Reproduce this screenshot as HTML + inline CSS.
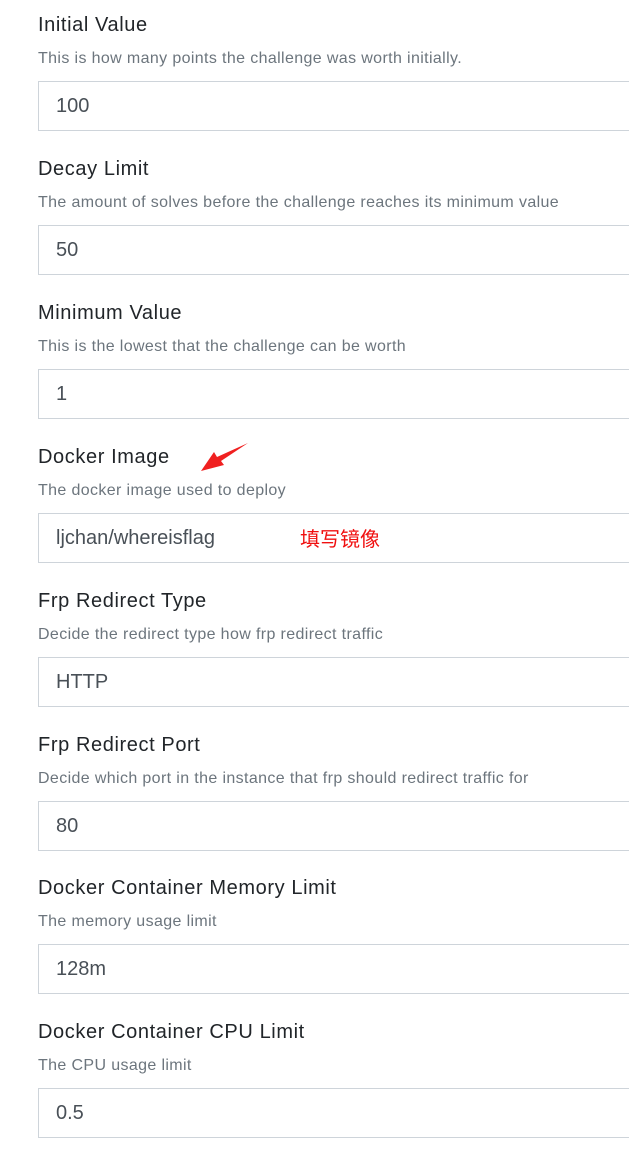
<!DOCTYPE html>
<html><head><meta charset="utf-8"><style>
body{margin:0;background:#fff;width:629px;height:1164px;overflow:hidden;position:relative;font-family:"Liberation Sans",sans-serif}
.g{position:absolute;left:38px;width:620px}
.l{position:absolute;top:1px;font-size:20px;color:#212529;line-height:24px;white-space:nowrap;letter-spacing:0.6px}
.d{position:absolute;top:37px;font-size:16px;color:#6c757d;line-height:20px;white-space:nowrap;letter-spacing:0.37px}
.i{position:absolute;top:69px;left:0;width:620px;height:48px;border:1px solid #ced4da;box-sizing:content-box;font-size:20px;color:#495057;line-height:48px;padding-left:17px}
</style></head><body>
<div class="g" style="top:12px"><div class="l">Initial Value</div><div class="d">This is how many points the challenge was worth initially.</div><div class="i">100</div></div>
<div class="g" style="top:156px"><div class="l">Decay Limit</div><div class="d">The amount of solves before the challenge reaches its minimum value</div><div class="i">50</div></div>
<div class="g" style="top:300px"><div class="l">Minimum Value</div><div class="d">This is the lowest that the challenge can be worth</div><div class="i">1</div></div>
<div class="g" style="top:444px"><div class="l">Docker Image</div><div class="d">The docker image used to deploy</div><div class="i">ljchan/whereisflag<span style="position:absolute;left:261px;color:#f01010;font-family:'Noto Sans CJK SC',sans-serif;font-size:20px">填写镜像</span></div></div>
<div class="g" style="top:588px"><div class="l">Frp Redirect Type</div><div class="d">Decide the redirect type how frp redirect traffic</div><div class="i">HTTP</div></div>
<div class="g" style="top:732px"><div class="l">Frp Redirect Port</div><div class="d">Decide which port in the instance that frp should redirect traffic for</div><div class="i">80</div></div>
<div class="g" style="top:875px"><div class="l">Docker Container Memory Limit</div><div class="d">The memory usage limit</div><div class="i">128m</div></div>
<div class="g" style="top:1019px"><div class="l">Docker Container CPU Limit</div><div class="d">The CPU usage limit</div><div class="i">0.5</div></div>
<svg style="position:absolute;left:0;top:0" width="629" height="1164"><polygon points="248,443 221,461 224,465 201,471 214,452 217,457" fill="#f02020"/></svg>
</body></html>
